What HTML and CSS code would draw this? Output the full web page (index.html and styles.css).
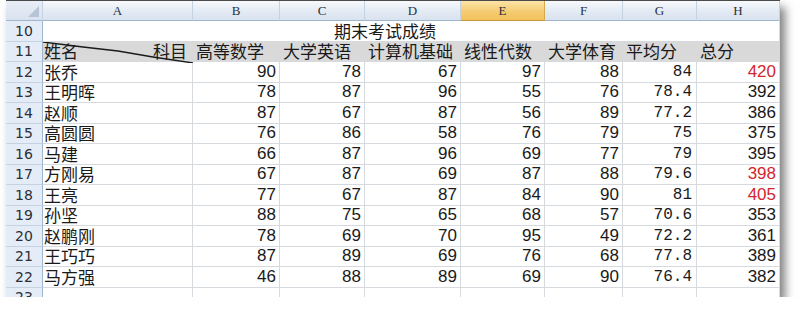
FILE: index.html
```html
<!DOCTYPE html>
<html lang="zh-CN">
	<head>
		<meta charset="UTF-8" />
		<meta name="viewport" content="width=device-width, initial-scale=1.0" />
		<title>期末考试成绩</title>
		<link rel="stylesheet" href="styles.css">
	</head>

	<body>
		<div class="sheet">
			<div class="grid">
				<!-- Column headers -->
				<div class="col-head corner"><span class="corner-mark"></span></div>
				<div class="col-head">A</div>
				<div class="col-head">B</div>
				<div class="col-head">C</div>
				<div class="col-head">D</div>
				<div class="col-head selected">E</div>
				<div class="col-head">F</div>
				<div class="col-head">G</div>
				<div class="col-head">H</div>

				<!-- Row 10: title -->
				<div class="row-head">10</div>
				<div class="cell title">期末考试成绩</div>

				<!-- Row 11: subject names -->
				<div class="row-head">11</div>
				<div class="cell label diag">
					<span>姓名</span><span>科目</span>
					<svg class="diag-line" viewBox="0 0 150 21" preserveAspectRatio="none">
						<polyline points="0,0 40,5 75,9 110,15 150,21" fill="none" stroke="#1a1a1a" stroke-width="1.3" />
					</svg>
				</div>
				<div class="cell label">高等数学</div>
				<div class="cell label">大学英语</div>
				<div class="cell label">计算机基础</div>
				<div class="cell label">线性代数</div>
				<div class="cell label">大学体育</div>
				<div class="cell label">平均分</div>
				<div class="cell label">总分</div>

				<div class="row-head">12</div>
				<div class="cell name">张乔</div>
				<div class="cell num">90</div><div class="cell num">78</div><div class="cell num">67</div><div class="cell num">97</div><div class="cell num">88</div>
				<div class="cell avg">84</div><div class="cell num red">420</div>

				<div class="row-head">13</div>
				<div class="cell name">王明晖</div>
				<div class="cell num">78</div><div class="cell num">87</div><div class="cell num">96</div><div class="cell num">55</div><div class="cell num">76</div>
				<div class="cell avg">78.4</div><div class="cell num">392</div>

				<div class="row-head">14</div>
				<div class="cell name">赵顺</div>
				<div class="cell num">87</div><div class="cell num">67</div><div class="cell num">87</div><div class="cell num">56</div><div class="cell num">89</div>
				<div class="cell avg">77.2</div><div class="cell num">386</div>

				<div class="row-head">15</div>
				<div class="cell name">高圆圆</div>
				<div class="cell num">76</div><div class="cell num">86</div><div class="cell num">58</div><div class="cell num">76</div><div class="cell num">79</div>
				<div class="cell avg">75</div><div class="cell num">375</div>

				<div class="row-head">16</div>
				<div class="cell name">马建</div>
				<div class="cell num">66</div><div class="cell num">87</div><div class="cell num">96</div><div class="cell num">69</div><div class="cell num">77</div>
				<div class="cell avg">79</div><div class="cell num">395</div>

				<div class="row-head">17</div>
				<div class="cell name">方刚易</div>
				<div class="cell num">67</div><div class="cell num">87</div><div class="cell num">69</div><div class="cell num">87</div><div class="cell num">88</div>
				<div class="cell avg">79.6</div><div class="cell num red">398</div>

				<div class="row-head">18</div>
				<div class="cell name">王亮</div>
				<div class="cell num">77</div><div class="cell num">67</div><div class="cell num">87</div><div class="cell num">84</div><div class="cell num">90</div>
				<div class="cell avg">81</div><div class="cell num red">405</div>

				<div class="row-head">19</div>
				<div class="cell name">孙坚</div>
				<div class="cell num">88</div><div class="cell num">75</div><div class="cell num">65</div><div class="cell num">68</div><div class="cell num">57</div>
				<div class="cell avg">70.6</div><div class="cell num">353</div>

				<div class="row-head">20</div>
				<div class="cell name">赵鹏刚</div>
				<div class="cell num">78</div><div class="cell num">69</div><div class="cell num">70</div><div class="cell num">95</div><div class="cell num">49</div>
				<div class="cell avg">72.2</div><div class="cell num">361</div>

				<div class="row-head">21</div>
				<div class="cell name">王巧巧</div>
				<div class="cell num">87</div><div class="cell num">89</div><div class="cell num">69</div><div class="cell num">76</div><div class="cell num">68</div>
				<div class="cell avg">77.8</div><div class="cell num">389</div>

				<div class="row-head">22</div>
				<div class="cell name">马方强</div>
				<div class="cell num">46</div><div class="cell num">88</div><div class="cell num">89</div><div class="cell num">69</div><div class="cell num">90</div>
				<div class="cell avg">76.4</div><div class="cell num">382</div>

				<!-- Row 23, cut off by the screenshot -->
				<div class="row-head">23</div>
				<div class="cell"></div><div class="cell"></div><div class="cell"></div><div class="cell"></div>
				<div class="cell"></div><div class="cell"></div><div class="cell"></div><div class="cell"></div>
			</div>
		</div>
	</body>
</html>
```

FILE: styles.css
```css
:root {
	--grid-line: #d6d9de;
	--head-border: #9eb6ce;
	--row-head-bg: #e4ecf7;
	--label-bg: #d9d9d9;
	--text-color: #1a1a1a;
	--red: #d3262b;
}

body {
	margin: 0;
	background-color: #fff;
	color: var(--text-color);
	font-family: "Noto Sans CJK SC", sans-serif;
}

/* The cropped sheet window with its drop shadow */
.sheet {
	margin-left: 6px;
	width: 774px;
	height: 297px;
	overflow: hidden;
	border-top: 1px solid #4a4a4a;
	box-sizing: border-box;
	box-shadow: 5px 7px 9px rgba(0, 0, 0, 0.5);
	background-color: #fff;
}

.grid {
	display: grid;
	grid-template-columns: 37px 150px 87px 85px 96px 84px 78px 74px 83px;
	grid-template-rows: 20px;
	grid-auto-rows: 20.5px;
}

.col-head {
	display: flex;
	align-items: center;
	justify-content: center;
	font-family: "Liberation Serif", serif;
	font-size: 13px;
	color: #27313d;
	background: linear-gradient(#f7f9fc, #e3eaf4 55%, #d9e2ee);
	border-right: 1px solid #c5d2e2;
	border-bottom: 1px solid var(--head-border);
}

.col-head.selected {
	background: linear-gradient(#fbe3a8, #f5cc72 55%, #f2c25d);
	border-right-color: #d9a848;
	border-bottom-color: #c8963a;
}

.corner {
	position: relative;
	background: linear-gradient(#e8eef6, #d9e2ee);
}

.corner-mark {
	position: absolute;
	right: 3px;
	bottom: 3px;
	width: 0;
	height: 0;
	border-left: 11px solid transparent;
	border-bottom: 11px solid #b6c4d6;
}

.row-head {
	display: flex;
	align-items: center;
	justify-content: center;
	font-family: "DejaVu Sans", sans-serif;
	font-size: 14px;
	line-height: 16px;
	color: #2b2f36;
	background-color: var(--row-head-bg);
	border-right: 1px solid var(--head-border);
	border-bottom: 1px solid #c5d2e2;
}

.cell {
	display: flex;
	align-items: center;
	border-right: 1px solid var(--grid-line);
	border-bottom: 1px solid var(--grid-line);
	font-size: 16.5px;
	line-height: 18px;
	white-space: nowrap;
}

.title {
	grid-column: span 8;
	justify-content: center;
	padding-right: 52px;
	font-size: 17px;
}

.label {
	background-color: var(--label-bg);
	border-right-color: var(--label-bg);
	padding-left: 3px;
	font-size: 17px;
}

.diag {
	position: relative;
	justify-content: space-between;
	padding: 0 5px 0 1px;
}

.diag-line {
	position: absolute;
	left: 0;
	top: 0;
	width: 150px;
	height: 21px;
}

.name {
	padding-left: 1px;
	font-size: 17px;
}

.num {
	justify-content: flex-end;
	padding-right: 3px;
	font-family: "Liberation Sans", sans-serif;
	font-size: 17px;
}

.avg {
	justify-content: flex-end;
	padding-right: 4px;
	font-family: "Liberation Mono", monospace;
	font-size: 16px;
}

.red {
	color: var(--red);
}
```
